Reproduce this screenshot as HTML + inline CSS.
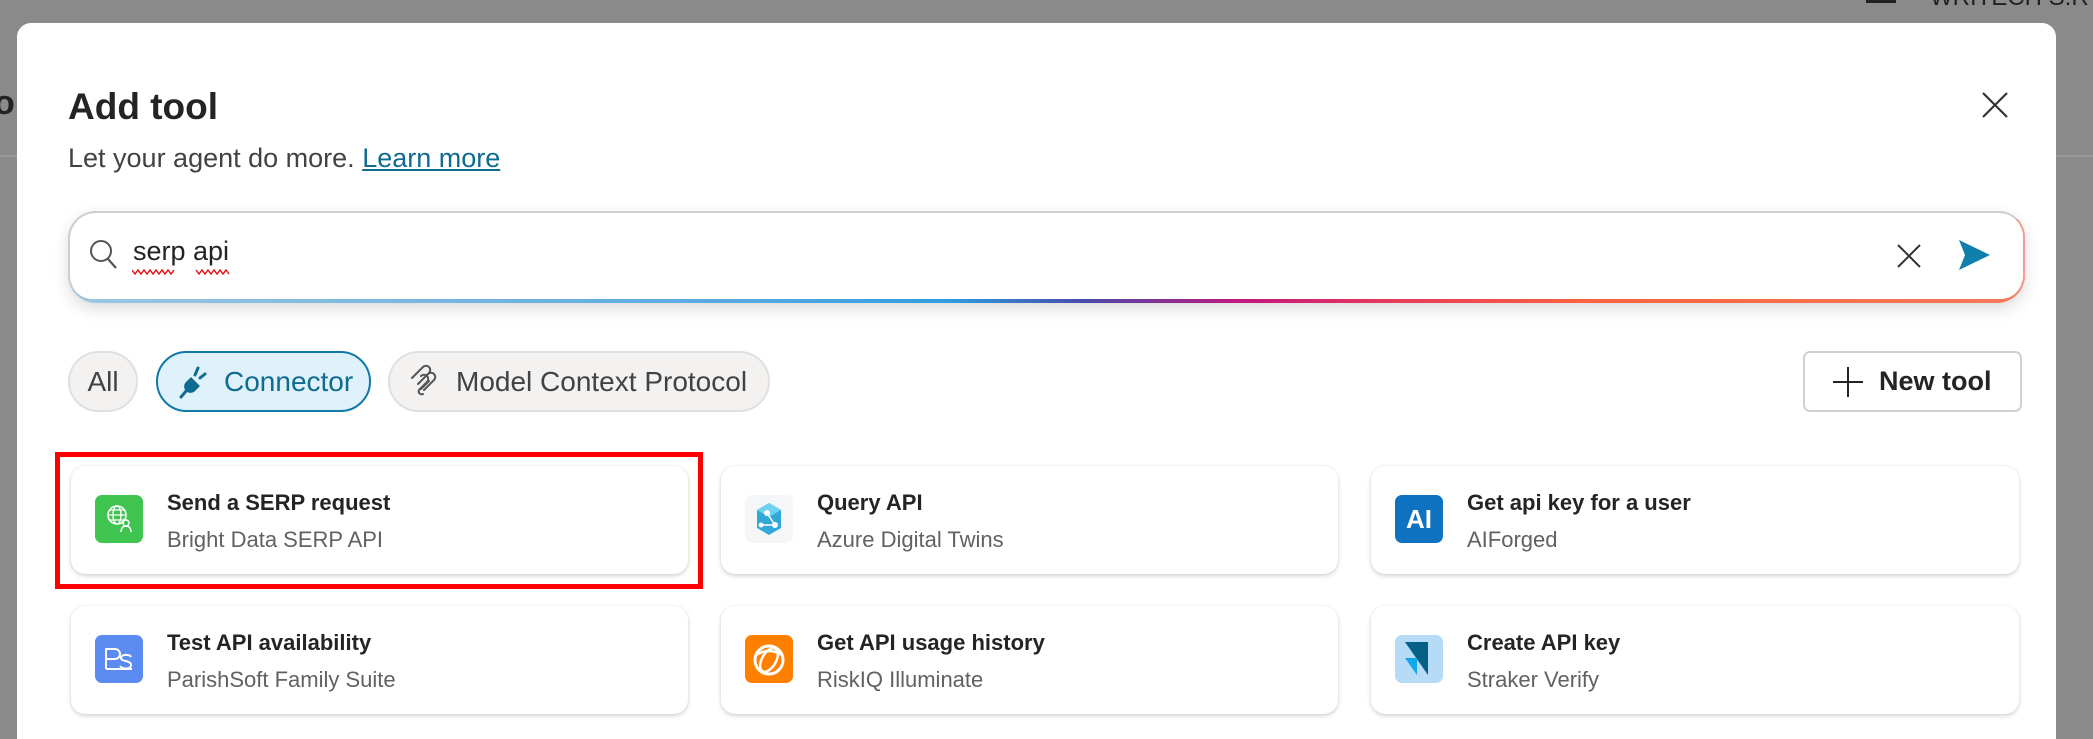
<!DOCTYPE html>
<html><head><meta charset="utf-8"><style>
*{box-sizing:border-box;margin:0;padding:0}
html,body{width:2093px;height:739px;overflow:hidden}
body{background:#8a8a8a;font-family:"Segoe UI","Liberation Sans",sans-serif;position:relative}
.abs{position:absolute}
.modal{left:17px;top:23px;width:2039px;height:716px;background:#fff;border-radius:14px 14px 0 0}
.title{left:68px;top:86px;font-size:37px;font-weight:600;color:#242424}
.sub{left:68px;top:143px;font-size:27px;color:#424242}
.sub a{color:#0f6b8f;text-decoration:underline}
.search{left:68px;top:211px;width:1957px;height:92px;border-radius:28px;padding:0 0 4px 0;background:linear-gradient(90deg,#9cc7e0 0%,#56a8e0 35%,#2e9ee0 45%,#4a4aa8 52%,#c2187f 60%,#e83c5a 68%,#fa6440 78%,#f47a5c 100%);box-shadow:0 6px 16px rgba(0,0,0,.14)}
.search .in{width:100%;height:100%;background:#fff;border-radius:28px 26px 24px 24px;border:2px solid #cfcfcf;border-bottom:none;border-right-color:#f0a090}
.chip{top:351px;height:61px;border-radius:31px;font-size:28px;display:flex;align-items:center;color:#424242;background:#f3f2f1;border:2px solid #e0e0e0}
.card{background:#fff;border-radius:14px;box-shadow:0 2px 5px rgba(0,0,0,.16),0 0 2px rgba(0,0,0,.08);height:108px}
.ic{position:absolute;left:24px;top:29px;width:48px;height:48px;border-radius:7px;overflow:hidden}
.t1{position:absolute;left:96px;top:24px;font-size:22px;font-weight:600;color:#242424;white-space:nowrap}
.t2{position:absolute;left:96px;top:61px;font-size:22px;color:#616161;white-space:nowrap}
</style></head><body>
<div class="abs" style="left:0;top:155px;width:17px;height:2px;background:#9a9a9a"></div>
<div class="abs" style="left:-6px;top:84px;font-size:34px;color:#222;font-weight:600">o</div>
<div class="abs" style="left:1866px;top:0;width:30px;height:3px;background:#222"></div>
<div class="abs" style="left:1930px;top:-16px;font-size:24px;color:#222">WRITECH S.R</div>
<div class="abs" style="left:2056px;top:155px;width:37px;height:2px;background:#9a9a9a"></div>
<div class="abs modal"></div>
<div class="abs title">Add tool</div>
<div class="abs sub">Let your agent do more. <a>Learn more</a></div>
<svg class="abs" style="left:1982px;top:92px" width="26" height="26" viewBox="0 0 26 26"><path d="M1 1L25 25M25 1L1 25" stroke="#333" stroke-width="2.2"/></svg>
<div class="abs search"><div class="in"></div></div>
<svg class="abs" style="left:88px;top:238px" width="30" height="32" viewBox="0 0 30 32"><circle cx="13" cy="13" r="10" fill="none" stroke="#555" stroke-width="2"/><path d="M20 21L28 30" stroke="#555" stroke-width="2.2"/></svg>
<div class="abs" style="left:133px;top:236px;font-size:27px;color:#242424">serp api</div>
<svg class="abs" style="left:132px;top:268px" width="110" height="8" viewBox="0 0 110 8"><path d="M0 2l3 4 3-4 3 4 3-4 3 4 3-4 3 4 3-4 3 4 3-4 3 4 3-4 3 4 3-4M64 2l3 4 3-4 3 4 3-4 3 4 3-4 3 4 3-4 3 4 3-4 3 4" fill="none" stroke="#e00" stroke-width="1.3"/></svg>
<svg class="abs" style="left:1897px;top:244px" width="24" height="24" viewBox="0 0 24 24"><path d="M1 1L23 23M23 1L1 23" stroke="#333" stroke-width="2"/></svg>
<svg class="abs" style="left:1957px;top:239px" width="34" height="32" viewBox="0 0 34 32"><path d="M2 1L33 16L2 31L8 16Z" fill="#0f7fab"/></svg>
<div class="abs chip" style="left:68px;width:70px;justify-content:center">All</div>
<div class="abs chip" style="left:156px;width:215px;background:#dff1fb;border-color:#0f7aa6;color:#0f6b8f;padding-left:20px">
<svg width="34" height="34" viewBox="0 0 34 34"><path d="M20 3L17 10M27 9L22 13" stroke="#0f6b8f" stroke-width="3" stroke-linecap="round"/><path d="M13 12L22 21L17 26A6 6 0 0 1 8 17Z" fill="#0f6b8f"/><path d="M9 25L3 32" stroke="#0f6b8f" stroke-width="3" stroke-linecap="round"/></svg>
<span style="margin-left:12px">Connector</span></div>
<div class="abs chip" style="left:388px;width:382px;padding-left:18px">
<svg width="36" height="36" viewBox="0 0 36 36"><path d="M4 14L15 3a4 4 0 0 1 6 6L10 20M10 20L20 10a4 4 0 0 1 6 6L16 26M13 12a4 4 0 0 1 6 6l-8 8a3 3 0 0 0 4 4M21 17l-8 8" fill="none" stroke="#555" stroke-width="2" stroke-linecap="round"/></svg>
<span style="margin-left:12px">Model Context Protocol</span></div>
<div class="abs" style="left:1803px;top:351px;width:219px;height:61px;border:2px solid #d1d1d1;border-radius:7px;display:flex;align-items:center;padding-left:28px;font-size:27px;font-weight:600;color:#242424">
<svg width="30" height="30" viewBox="0 0 30 30"><path d="M15 0V30M0 15H30" stroke="#242424" stroke-width="2"/></svg><span style="margin-left:16px">New tool</span></div>
<div class="abs" style="left:55px;top:452px;width:648px;height:137px;border:5px solid #ff0000"></div>

<div class="abs card" style="left:71px;top:466px;width:617px">
<div class="ic" style="background:#3fc44f"><svg width="48" height="48" viewBox="0 0 48 48"><circle cx="22" cy="20" r="9" fill="none" stroke="#fff" stroke-width="1.6"/><ellipse cx="22" cy="20" rx="4" ry="9" fill="none" stroke="#fff" stroke-width="1.4"/><path d="M13 20H31M14 15H30M14 25H30" stroke="#fff" stroke-width="1.3"/><circle cx="31" cy="28" r="3" fill="#3fc44f" stroke="#fff" stroke-width="1.5"/><path d="M26 37c0-4 2-6 5-6s5 2 5 6" fill="none" stroke="#fff" stroke-width="1.5"/></svg></div>
<div class="t1">Send a SERP request</div><div class="t2">Bright Data SERP API</div></div>

<div class="abs card" style="left:721px;top:466px;width:617px">
<div class="ic" style="background:#f4f6f8"><svg width="48" height="48" viewBox="0 0 48 48"><path d="M24 8L36 15V33L24 40L12 33V15Z" fill="#32a8d8"/><path d="M24 8L36 15L24 22L12 15Z" fill="#6fd0f0"/><circle cx="22" cy="18" r="3" fill="#fff"/><circle cx="30" cy="30" r="3" fill="#fff"/><circle cx="16" cy="30" r="2.5" fill="#fff"/><path d="M22 18L30 30M16 30H30" stroke="#fff" stroke-width="1.5"/></svg></div>
<div class="t1">Query API</div><div class="t2">Azure Digital Twins</div></div>

<div class="abs card" style="left:1371px;top:466px;width:648px">
<div class="ic" style="background:#0f72c0;color:#fff;font:bold 26px 'Liberation Sans',sans-serif;display:flex;align-items:center;justify-content:center">AI</div>
<div class="t1">Get api key for a user</div><div class="t2">AIForged</div></div>

<div class="abs card" style="left:71px;top:606px;width:617px">
<div class="ic" style="background:#5b8af0"><svg width="48" height="48" viewBox="0 0 48 48"><path d="M11 34V14H20a5 5 0 0 1 0 10H11" fill="none" stroke="#fff" stroke-width="2"/><path d="M36 22c-1-3-10-3-10 1s10 2 10 7-9 4-11 1M11 34H37" fill="none" stroke="#fff" stroke-width="2"/></svg></div>
<div class="t1">Test API availability</div><div class="t2">ParishSoft Family Suite</div></div>

<div class="abs card" style="left:721px;top:606px;width:617px">
<div class="ic" style="background:#ff8000"><svg width="48" height="48" viewBox="0 0 48 48"><circle cx="24" cy="25" r="14" fill="none" stroke="#fff" stroke-width="3"/><ellipse cx="24" cy="25" rx="7" ry="13" fill="none" stroke="#fff" stroke-width="2.5" transform="rotate(30 24 25)"/><path d="M11 20Q24 12 37 20" fill="none" stroke="#fff" stroke-width="2.5"/></svg></div>
<div class="t1">Get API usage history</div><div class="t2">RiskIQ Illuminate</div></div>

<div class="abs card" style="left:1371px;top:606px;width:648px">
<div class="ic" style="background:#b6dbf7"><svg width="48" height="48" viewBox="0 0 48 48"><path d="M10 7H33V40Z" fill="#055f86"/><path d="M10 23H22L22 40Z" fill="#10a8e8"/></svg></div>
<div class="t1">Create API key</div><div class="t2">Straker Verify</div></div>
</body></html>
